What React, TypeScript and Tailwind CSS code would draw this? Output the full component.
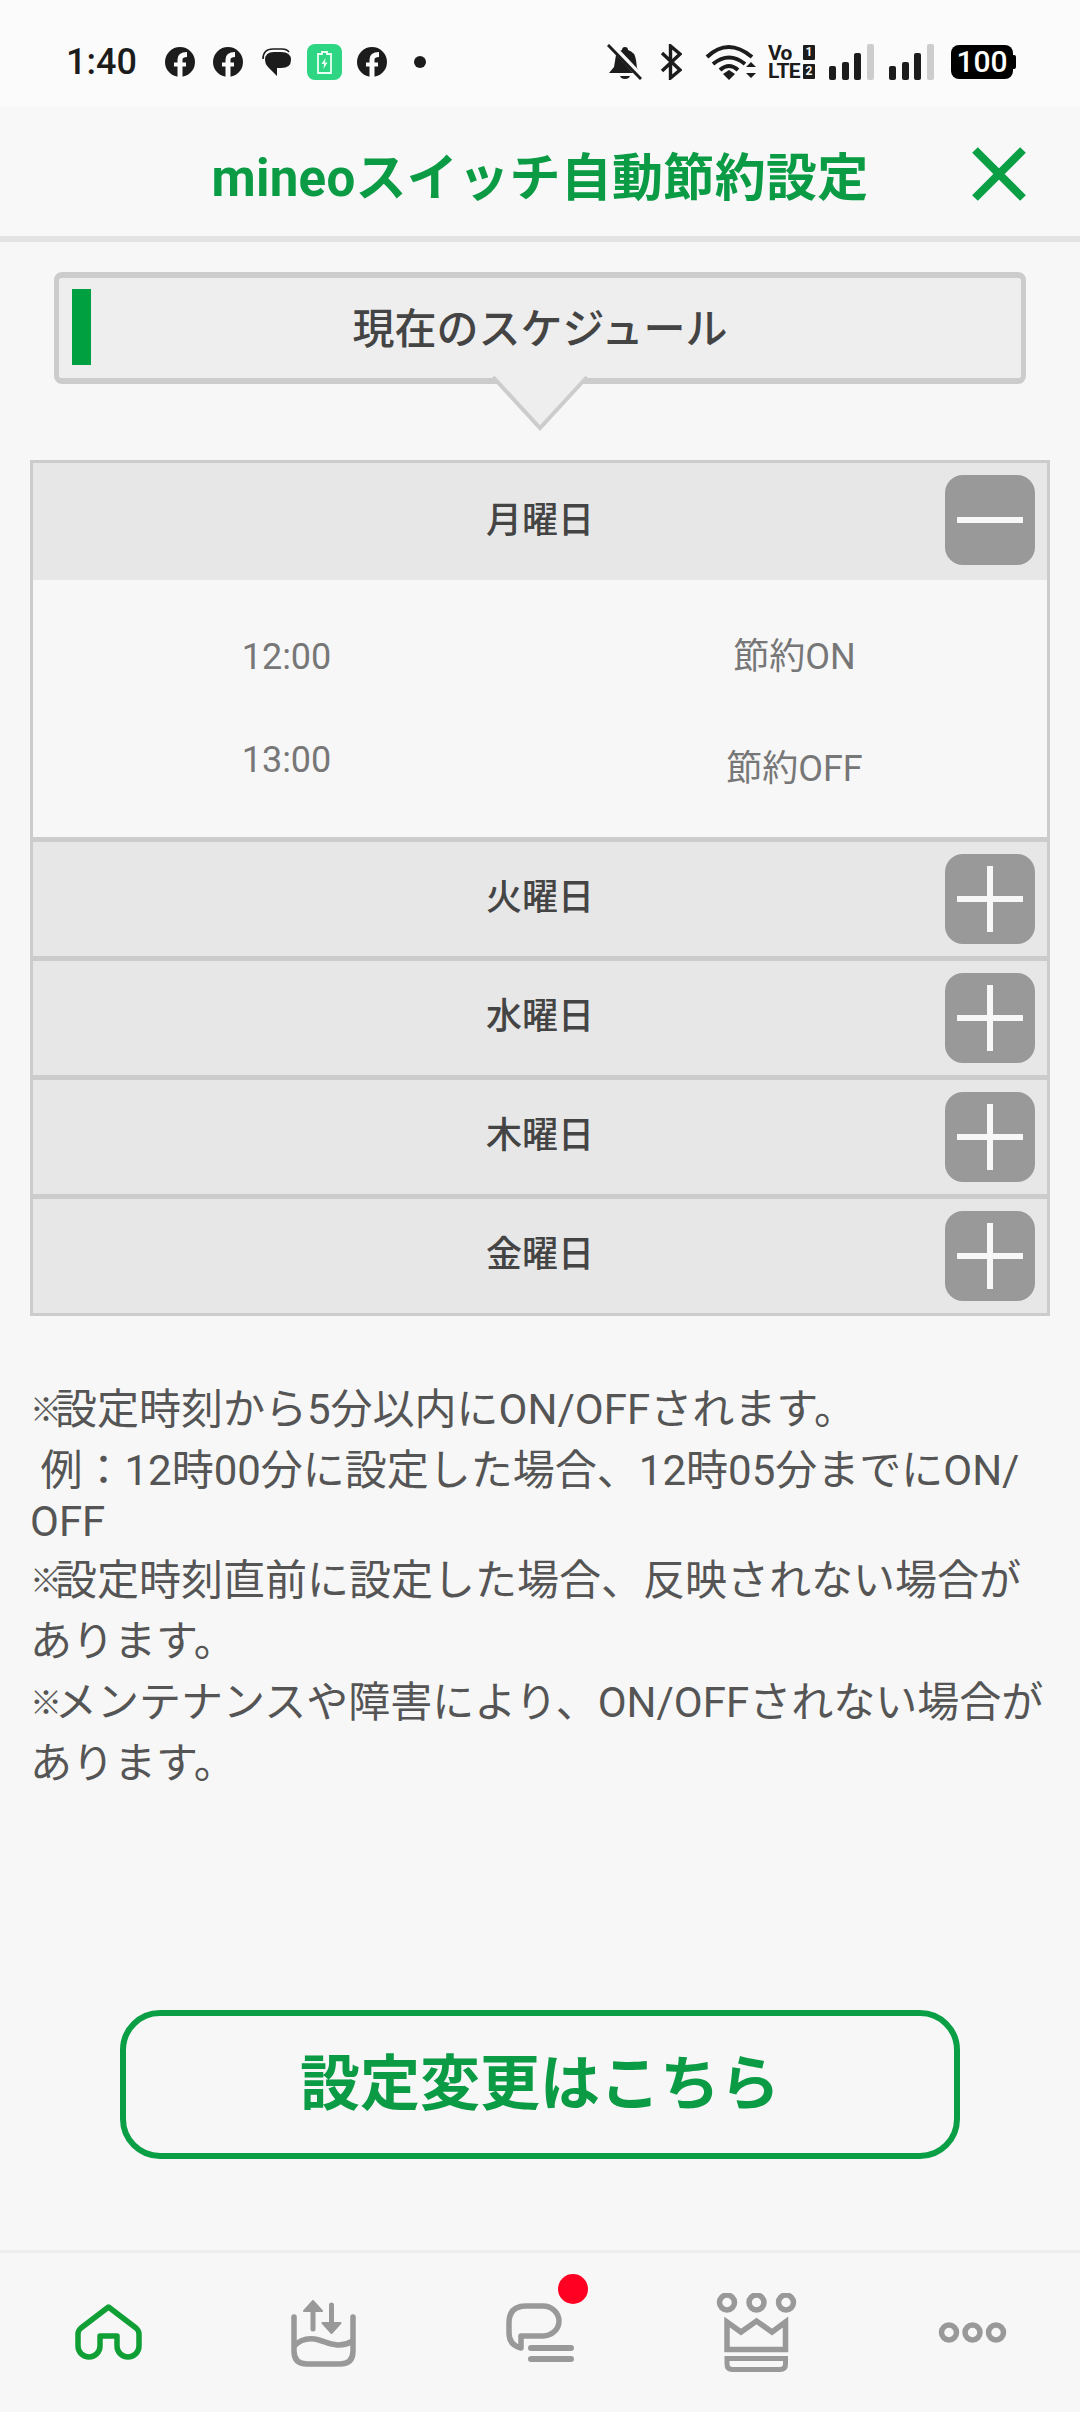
import React from 'react';

const FbIcon = () => (
  <svg width="30" height="30" viewBox="0 0 30 30" className="shrink-0">
    <circle cx="15" cy="15" r="15" fill="#1c1c1c" />
    <path d="M15 30 V12.5 Q15 7.5 22 7.5" fill="none" stroke="#fbfbfb" strokeWidth="5" />
    <path d="M9 17.5 H21" fill="none" stroke="#fbfbfb" strokeWidth="4" />
  </svg>
);

const MessageIcon = () => (
  <svg width="29" height="28" viewBox="0 0 29 28" className="shrink-0">
    <path d="M1 11 Q1 1 11 1 H20 Q25 1 27 4" fill="none" stroke="#1c1c1c" strokeWidth="1.6" />
    <path d="M12 4 H19 Q29 4 29 12 Q29 20 19 20 H15 V28 L6 19 Q3 16 3 12 Q3 4 12 4 Z" fill="#1c1c1c" />
  </svg>
);

const BatteryApp = () => (
  <div className="w-[35px] h-[36px] rounded-[8px] bg-[#2ed582] flex items-center justify-center shrink-0">
    <svg width="15" height="23" viewBox="0 0 15 23">
      <path d="M5 1 H10 V3 H14 V22 H1 V3 H5 Z" fill="none" stroke="#eafff4" strokeWidth="1.8" />
      <path d="M8.5 7 L4.5 13 H7 L6.5 18 L10.5 11.5 H8 Z" fill="#eafff4" />
    </svg>
  </div>
);

const BellOff = () => (
  <svg width="35" height="36" viewBox="0 0 35 36" className="shrink-0">
    <path d="M18 3 Q21 3 21 6 Q28 8 29 16 L30 24 L33 29 H2 L7 23 L9 11 Q11 7 15 6 Q15 3 18 3 Z" fill="#1c1c1c" />
    <path d="M13 32 H23 Q22 35 18 35 Q14 35 13 32 Z" fill="#1c1c1c" />
    <path d="M3 0 L35 34" stroke="#fbfbfb" strokeWidth="6" />
    <path d="M1 1 L34 35" stroke="#1c1c1c" strokeWidth="3" />
  </svg>
);

const BluetoothIcon = () => (
  <svg width="22" height="36" viewBox="0 0 22 36" className="shrink-0">
    <path d="M2 9 L20 26 L10.5 34 V2 L20 10 L2 27" fill="none" stroke="#1c1c1c" strokeWidth="3.4" />
  </svg>
);

const WifiIcon = () => (
  <svg width="51" height="36" viewBox="0 0 51 36" className="shrink-0">
    <path d="M2 13 Q23 -7 47 13" fill="none" stroke="#1c1c1c" strokeWidth="4" />
    <path d="M8 20 Q24 7 40 20" fill="none" stroke="#1c1c1c" strokeWidth="4" />
    <path d="M15 26 Q24 18 33 26" fill="none" stroke="#1c1c1c" strokeWidth="4" />
    <path d="M18 30 L24 26 L30 30 L24 36 Z" fill="#1c1c1c" />
    <path d="M41 23 L46 18 L51 23 Z M41 29 L51 29 L46 34 Z" fill="#1c1c1c" />
  </svg>
);

const SignalIcon = () => (
  <div className="flex items-end gap-[5.67px] h-[36px] shrink-0">
    <div className="w-[7px] h-[14px] rounded-[2px] bg-[#1c1c1c]" />
    <div className="w-[7px] h-[18px] rounded-[2px] bg-[#1c1c1c]" />
    <div className="w-[7px] h-[27px] rounded-[2px] bg-[#1c1c1c]" />
    <div className="w-[7px] h-[36px] rounded-[2px] bg-[#cdcdcd]" />
  </div>
);

const VoLte = () => (
  <div className="w-[47px] h-[36px] flex justify-between shrink-0 text-[#1c1c1c] font-bold">
    <span className="text-[21px] leading-[18px] tracking-[-0.7px]">Vo<br />LTE</span>
    <div className="flex flex-col justify-between h-[36px] py-[1px]">
      <span className="w-[12px] h-[15px] bg-[#1c1c1c] text-[#fbfbfb] text-[12px] leading-[15px] text-center rounded-[1px]">1</span>
      <span className="w-[12px] h-[15px] bg-[#1c1c1c] text-[#fbfbfb] text-[12px] leading-[15px] text-center rounded-[1px]">2</span>
    </div>
  </div>
);

const StatusBar = () => (
  <div className="h-[107px] pt-[17px] bg-[#fbfbfb] flex items-center justify-between pl-[66px] pr-[64px] shrink-0">
    <div className="flex items-center">
      <span className="text-[36px] leading-none font-medium text-[#1c1c1c] w-[99px]">1:40</span>
      <FbIcon />
      <div className="ml-[18px]"><FbIcon /></div>
      <div className="ml-[19px]"><MessageIcon /></div>
      <div className="ml-[16px]"><BatteryApp /></div>
      <div className="ml-[15px]"><FbIcon /></div>
      <div className="ml-[27px] w-[12px] h-[12px] rounded-full bg-[#1c1c1c]" />
    </div>
    <div className="flex items-center">
      <BellOff />
      <div className="ml-[18px]"><BluetoothIcon /></div>
      <div className="ml-[23px]"><WifiIcon /></div>
      <div className="ml-[12px]"><VoLte /></div>
      <div className="ml-[14px]"><SignalIcon /></div>
      <div className="ml-[15px]"><SignalIcon /></div>
      <div className="ml-[17px] flex items-center">
        <div className="w-[62px] h-[34px] bg-black rounded-[8px] text-white text-[30px] leading-[34px] font-medium text-center">100</div>
        <div className="w-[3px] h-[14px] bg-black rounded-r-[2px]" />
      </div>
    </div>
  </div>
);

const Header = () => (
  <div className="relative h-[135px] pt-[14px] bg-[#f7f8f7] border-b-[6px] border-[#e3e3e3] flex items-center justify-center shrink-0">
    <h1 className="text-[51px] leading-none font-bold tracking-[0.3px] text-[#0a9b44]">mineoスイッチ自動節約設定</h1>
    <svg width="54" height="54" viewBox="0 0 54 54" className="absolute right-[54px] top-[40px]">
      <path d="M3 3 L51 51 M51 3 L3 51" fill="none" stroke="#0a9f45" strokeWidth="8" />
    </svg>
  </div>
);

const Bubble = () => (
  <div className="relative mt-[30px] mx-[54px] h-[112px] rounded-[8px] bg-[#eeeeee] border-x-[5px] border-y-[6px] border-[#cccccc] flex items-center justify-center shrink-0">
    <div className="absolute left-[13px] top-[11px] w-[19px] h-[76px] bg-[#00a040]" />
    <span className="text-[42px] leading-none font-medium text-[#444444] pt-[3px]">現在のスケジュール</span>
    <svg width="104" height="60" viewBox="0 0 104 60" className="absolute left-[429px] top-[97px]">
      <path d="M5 2 L52 53 L99 2" fill="#eeeeee" stroke="#cccccc" strokeWidth="4" />
    </svg>
  </div>
);

const DayRow = ({ name, open, first }: { name: string; open?: boolean; first?: boolean }) => (
  <div className={`relative bg-[#e7e7e7] flex items-center justify-center ${first ? 'h-[117px]' : 'h-[114px] border-t-[5px] box-content border-[#cccccc]'}`}>
    <span className="text-[36px] leading-none font-medium text-[#444444] pb-[2px]">{name}</span>
    <div className="absolute right-[12px] top-[12px] w-[90px] h-[90px] rounded-[18px] bg-[#999999] flex items-center justify-center">
      <div className="relative w-[66px] h-[66px]">
        <div className="absolute left-0 top-[30px] w-[66px] h-[6px] bg-[#f7f7f7]" />
        {!open && <div className="absolute left-[30px] top-0 w-[6px] h-[66px] bg-[#f7f7f7]" />}
      </div>
    </div>
  </div>
);

const Schedule = () => (
  <div className="mt-[76px] mx-[30px] border-[3px] border-[#cccccc] shrink-0">
    <DayRow name="月曜日" open first />
    <div className="h-[257px] bg-[#f7f7f7] grid grid-cols-2 grid-rows-2 py-[26px] text-[36px] leading-none text-[#777777] text-center">
      <div className="flex items-center justify-center">12:00</div>
      <div className="flex items-center justify-center pl-[2px]">節約ON</div>
      <div className="flex items-center justify-center">13:00</div>
      <div className="flex items-center justify-center pl-[2px] pt-[18px]">節約OFF</div>
    </div>
    <DayRow name="火曜日" />
    <DayRow name="水曜日" />
    <DayRow name="木曜日" />
    <DayRow name="金曜日" />
  </div>
);

const Mark = () => (
  <span className="text-[32px] leading-none tracking-[-7px] font-medium relative top-[-3px]">※</span>
);

const Notes = () => (
  <div className="mt-[59px] mx-[30px] text-[42px] leading-[normal] text-[#555555] whitespace-nowrap shrink-0">
    <p><Mark />設定時刻から5分以内にON/OFFされます。</p>
    <p>&nbsp;例：12時00分に設定した場合、12時05分までにON/<br />OFF</p>
    <p><Mark />設定時刻直前に設定した場合、反映されない場合が<br />あります。</p>
    <p><Mark />メンテナンスや障害により、ON/OFFされない場合が<br />あります。</p>
  </div>
);

const NavIcons = {
  home: (
    <svg width="67" height="57" viewBox="0 0 67 57">
      <path d="M33.5 3 L61 24 Q64 26.5 64 30 V42 a11 11 0 0 1 -22 0 V32 H25 V42 a11 11 0 0 1 -22 0 V30 Q3 26.5 6 24 Z" fill="none" stroke="#0f9f35" strokeWidth="5.5" strokeLinejoin="round" />
    </svg>
  ),
  tub: (
    <svg width="66" height="68" viewBox="0 0 66 68">
      <path d="M3 18 V52 Q3 65 16 65 H49 Q62 65 62 52 V18" fill="none" stroke="#999999" strokeWidth="5.5" strokeLinecap="round" />
      <path d="M3 47 C10 40 18 38 28 41 S 48 50 62 42" fill="none" stroke="#999999" strokeWidth="5.5" />
      <path d="M22 30 V8" fill="none" stroke="#999999" strokeWidth="5" strokeLinecap="round" />
      <path d="M22 2 L31 12 H13 Z" fill="#999999" stroke="#999999" strokeWidth="2" strokeLinejoin="round" />
      <path d="M40.5 6 V26" fill="none" stroke="#999999" strokeWidth="5" strokeLinecap="round" />
      <path d="M40.5 34 L31.5 24 H49.5 Z" fill="#999999" stroke="#999999" strokeWidth="2" strokeLinejoin="round" />
    </svg>
  ),
  chat: (
    <svg width="68" height="60" viewBox="0 0 68 60">
      <path d="M20 3 H37 A16 15 0 0 1 37 33 H15 V45 Q3 42 3 30 V20 Q3 3 20 3 Z" fill="none" stroke="#999999" strokeWidth="5.5" strokeLinejoin="round" />
      <path d="M25 45 H65 M25 56 H65" fill="none" stroke="#999999" strokeWidth="6" strokeLinecap="round" />
    </svg>
  ),
  crown: (
    <svg width="81" height="80" viewBox="0 0 81 80">
      <circle cx="11" cy="9.5" r="7.5" fill="none" stroke="#999999" strokeWidth="5.5" />
      <circle cx="40.5" cy="9.5" r="7.5" fill="none" stroke="#999999" strokeWidth="5.5" />
      <circle cx="70" cy="9.5" r="7.5" fill="none" stroke="#999999" strokeWidth="5.5" />
      <path d="M11 29 L25 39 L40.5 28 L56 39 L69.5 29 V56.5 H11 Z" fill="none" stroke="#999999" strokeWidth="5.5" />
      <path d="M11 65.5 H69.5 V71 Q69.5 76.5 64 76.5 H16.5 Q11 76.5 11 71 Z" fill="none" stroke="#999999" strokeWidth="5" />
    </svg>
  ),
  more: (
    <svg width="69" height="21" viewBox="0 0 69 21">
      <circle cx="11" cy="10.5" r="7.5" fill="none" stroke="#999999" strokeWidth="5.5" />
      <circle cx="34.5" cy="10.5" r="7.5" fill="none" stroke="#999999" strokeWidth="5.5" />
      <circle cx="58" cy="10.5" r="7.5" fill="none" stroke="#999999" strokeWidth="5.5" />
    </svg>
  ),
};

const BottomNav = () => (
  <div className="mt-auto h-[162px] border-t-[3px] border-[#eeeeee] bg-[#f7f7f7] grid grid-cols-5 shrink-0">
    <div className="flex items-center justify-center">{NavIcons.home}</div>
    <div className="flex items-center justify-center">{NavIcons.tub}</div>
    <div className="flex items-center justify-center">
      <div className="relative">
        {NavIcons.chat}
        <div className="absolute left-[52px] top-[-29px] w-[30px] h-[30px] rounded-full bg-[#ff0022]" />
      </div>
    </div>
    <div className="flex items-center justify-center">{NavIcons.crown}</div>
    <div className="flex items-center justify-center">{NavIcons.more}</div>
  </div>
);

export default function App() {
  return (
    <div lang="ja" className="w-[1080px] h-[2412px] bg-[#f7f7f7] flex flex-col overflow-hidden font-['Roboto','Noto_Sans_CJK_JP',sans-serif]">
      <StatusBar />
      <Header />
      <Bubble />
      <Schedule />
      <Notes />
      <button className="mt-[220px] mx-[120px] h-[149px] rounded-[40px] border-[6px] border-[#0a9f45] text-[60px] leading-none font-bold text-[#0a9b44] shrink-0">
        設定変更はこちら
      </button>
      <BottomNav />
    </div>
  );
}
